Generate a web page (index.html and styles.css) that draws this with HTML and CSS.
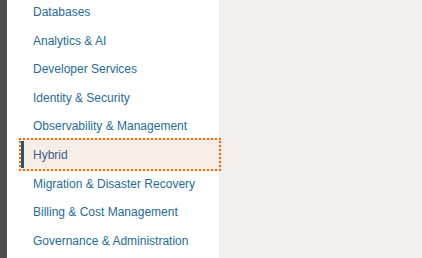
FILE: index.html
```html
<!DOCTYPE html>
<html>
<head>
<meta charset="utf-8">
<link rel="stylesheet" href="styles.css">
</head>
<body>
<div class="layout">
  <div class="rail"></div>
  <nav class="nav">
    <ul class="list">
      <li class="item">Databases</li>
      <li class="item">Analytics &amp; AI</li>
      <li class="item">Developer Services</li>
      <li class="item">Identity &amp; Security</li>
      <li class="item">Observability &amp; Management</li>
      <li class="item active">Hybrid</li>
      <li class="item">Migration &amp; Disaster Recovery</li>
      <li class="item">Billing &amp; Cost Management</li>
      <li class="item">Governance &amp; Administration</li>
    </ul>
  </nav>
  <main class="main"></main>
</div>
</body>
</html>
```
FILE: styles.css
```css
html, body {
  margin: 0;
  padding: 0;
  height: 100%;
  overflow: hidden;
}
body {
  font-family: "Liberation Sans", Arial, sans-serif;
  font-size: 12px;
  background: #f2f0ef;
}
.layout {
  display: flex;
  height: 258px;
}
.rail {
  width: 7px;
  flex: none;
  background: #4d4d4d;
  border-right: 1px solid #5c5c5c;
  box-sizing: border-box;
}
.nav {
  width: 212px;
  flex: none;
  background: #ffffff;
  padding-left: 14px;
  box-sizing: border-box;
}
.list {
  list-style: none;
  margin: -3px 0 0 0;
  padding: 0;
}
.item {
  height: 28.6px;
  box-sizing: border-box;
  padding: 3px 0 0 12px;
  line-height: 25.6px;
  color: #256b99;
  white-space: nowrap;
  position: relative;
}
.item.active {
  background: #f6ede7;
  color: #3e6183;
  outline: 2px dotted #ff6a00;
  box-shadow: 0 0 2px 2px rgba(255, 140, 60, 0.22);
}
.item.active::before {
  content: "";
  position: absolute;
  left: 0;
  top: 1px;
  bottom: 1px;
  width: 3px;
  background: #1b5b73;
}
.main {
  flex: 1;
  background: #f2f0ef;
}
```
